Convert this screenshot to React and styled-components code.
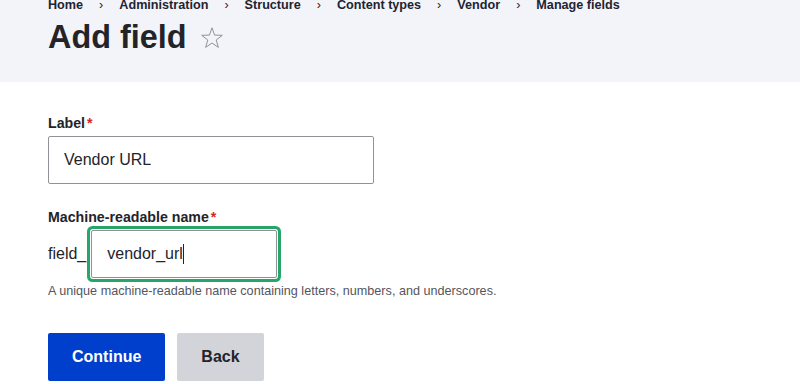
import React from 'react'
import styled, { createGlobalStyle } from 'styled-components'

const GlobalStyle = createGlobalStyle`
  body {
    margin: 0;
    background: #fff;
    font-family: 'Liberation Sans', Arial, sans-serif;
    color: #222330;
    overflow: hidden;
  }
`

const Header = styled.header`
  background: #f3f4f9;
  height: 82px;
  padding: 0 48px;
  box-sizing: border-box;
  overflow: hidden;
`

const Crumbs = styled.ol`
  display: flex;
  align-items: center;
  list-style: none;
  margin: -3px 0 0;
  padding: 0;
  font-size: 12.64px;
  line-height: 16px;
  font-weight: 700;
  color: #222330;
`

const Crumb = styled.li`
  display: flex;
  align-items: center;
`

const Sep = styled.span`
  padding: 0 16px;
  font-weight: 400;
`

const TitleRow = styled.div`
  display: flex;
  align-items: center;
  gap: 13px;
  margin-top: 4px;
`

const Title = styled.h1`
  margin: 0;
  font-size: 32.4px;
  line-height: 40px;
  font-weight: 700;
  color: #232429;
`

const Star = styled.svg`
  width: 24px;
  height: 24px;
  margin-top: 1px;
`

const Form = styled.form`
  padding: 32px 48px 0;
`

const Field = styled.div`
  margin-bottom: ${({ gap }) => gap}px;
`

const Label = styled.label`
  display: block;
  font-size: 14.2px;
  line-height: 18px;
  font-weight: 700;
  color: #232429;
  margin-bottom: 4px;
  &::after {
    content: '*';
    color: #dc2323;
    margin-left: 2px;
  }
`

const TextInput = styled.input`
  box-sizing: border-box;
  display: block;
  height: 48px;
  width: ${({ w }) => w}px;
  padding: 0 15px;
  border: 1px solid #919297;
  border-radius: 2px;
  font-family: inherit;
  font-size: 16px;
  color: #232429;
  background: #fff;
  outline: none;
  caret-color: #232429;
  ${({ focused }) => focused && `
    box-shadow: 0 0 0 1px #fff, 0 0 0 4px #26a769;
  `}
`

const PrefixRow = styled.div`
  display: flex;
  align-items: center;
  gap: 5px;
  font-size: 16px;
  color: #232429;
`

const InputWrap = styled.div`
  position: relative;
`

const Caret = styled.span`
  position: absolute;
  left: 92px;
  top: 14px;
  width: 1px;
  height: 20px;
  background: #232429;
  pointer-events: none;
`

const Description = styled.div`
  margin-top: 6px;
  font-size: 12.64px;
  line-height: 15px;
  color: #545560;
`

const Actions = styled.div`
  display: flex;
  gap: 12px;
`

const Button = styled.button`
  height: 48px;
  padding: 0 24px;
  border: none;
  border-radius: 2px;
  font-family: inherit;
  font-size: 16px;
  font-weight: 700;
  cursor: pointer;
  background: ${({ primary }) => (primary ? '#003ecc' : '#d3d4d9')};
  color: ${({ primary }) => (primary ? '#fff' : '#232429')};
`

const crumbs = ['Home', 'Administration', 'Structure', 'Content types', 'Vendor', 'Manage fields']

export default function App() {
  return (
    <>
      <GlobalStyle />
      <Header>
        <Crumbs>
          {crumbs.map((c, i) => (
            <Crumb key={c}>
              {c}
              {i < crumbs.length - 1 && <Sep>›</Sep>}
            </Crumb>
          ))}
        </Crumbs>
        <TitleRow>
          <Title>Add field</Title>
          <Star viewBox="0 0 24 24">
            <path
              d="M12 1.8 L14.6 9.1 L22.3 9.3 L16.2 14 L18.4 21.4 L12 17 L5.6 21.4 L7.8 14 L1.7 9.3 L9.4 9.1 Z"
              fill="none"
              stroke="#8e929c"
              strokeWidth="1"
              strokeLinejoin="miter"
            />
          </Star>
        </TitleRow>
      </Header>
      <Form onSubmit={(e) => e.preventDefault()}>
        <Field gap={24}>
          <Label>Label</Label>
          <TextInput w={326} defaultValue="Vendor URL" />
        </Field>
        <Field gap={34}>
          <Label>Machine-readable name</Label>
          <PrefixRow>
            field_
            <InputWrap>
              <TextInput w={186} focused defaultValue="vendor_url" />
              <Caret />
            </InputWrap>
          </PrefixRow>
          <Description>A unique machine-readable name containing letters, numbers, and underscores.</Description>
        </Field>
        <Actions>
          <Button primary type="submit">Continue</Button>
          <Button type="button">Back</Button>
        </Actions>
      </Form>
    </>
  )
}
